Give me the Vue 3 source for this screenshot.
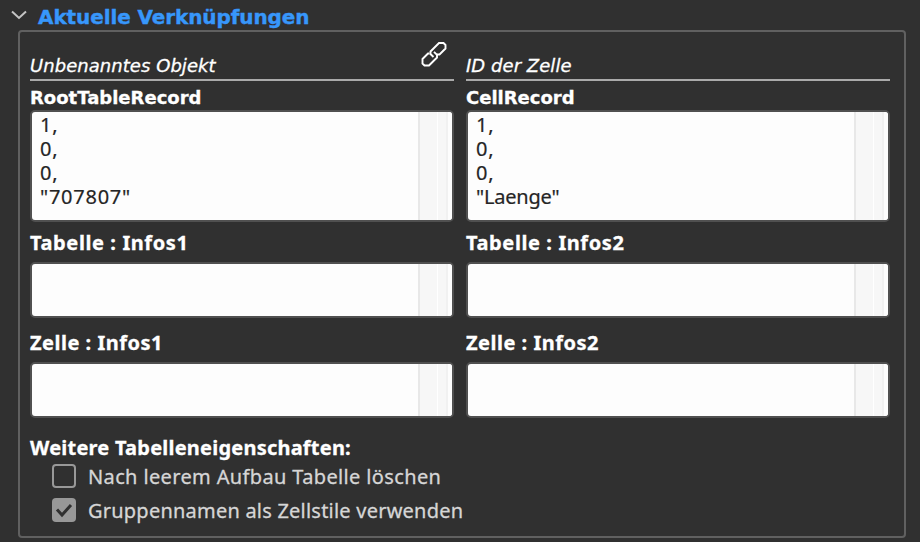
<script setup>
import { ref } from "vue";

const open = ref(true);

const columns = ref([
  {
    head: "Unbenanntes Objekt",
    link: true,
    record: "RootTableRecord",
    value: ["1,", "0,", "0,", '"707807"'],
    table: "Tabelle : Infos1",
    cell: "Zelle : Infos1"
  },
  {
    head: "ID der Zelle",
    link: false,
    record: "CellRecord",
    value: ["1,", "0,", "0,", '"Laenge"'],
    table: "Tabelle : Infos2",
    cell: "Zelle : Infos2"
  }
]);

const options = ref([
  { label: "Nach leerem Aufbau Tabelle löschen", checked: false },
  { label: "Gruppennamen als Zellstile verwenden", checked: true }
]);

const isNumeric = (line) => /\d/.test(line);
</script>

<template>
  <div class="page">
    <header @click="open = !open">
      <svg class="arrow" width="16" height="10" viewBox="0 0 16 10">
        <path d="M1 1.5 L8 8 L15 1.5" />
      </svg>
      <h1>Aktuelle Verknüpfungen</h1>
    </header>
    <section v-show="open" class="panel">
      <div class="columns">
        <div v-for="col in columns" :key="col.record" class="column">
          <div class="head">
            <em>{{ col.head }}</em>
            <svg v-if="col.link" class="link" width="28" height="28" viewBox="0 0 28 28">
              <path d="M13.5 17 L10.5 14 V11.5 L19 3 H23.5 L25.5 5 V8.5 L19.5 14.5 H16.5" />
              <path d="M9.5 13.5 H8 L2.5 19 V23.5 L4.5 25.5 H9 L17 17.5 V14.8 L14 11.8" />
            </svg>
          </div>
          <h2 class="record">{{ col.record }}</h2>
          <div class="box tall">
            <div class="value">
              <div v-for="(line, i) in col.value" :key="i" :class="{ numeric: isNumeric(line) }">{{ line }}</div>
            </div>
            <span class="gutter"></span>
          </div>
          <h2 class="table">{{ col.table }}</h2>
          <div class="box"><span class="gutter"></span></div>
          <h2 class="cell">{{ col.cell }}</h2>
          <div class="box"><span class="gutter"></span></div>
        </div>
      </div>
      <h2 class="more">Weitere Tabelleneigenschaften:</h2>
      <div v-for="opt in options" :key="opt.label" class="option" @click="opt.checked = !opt.checked">
        <span class="check" :class="{ checked: opt.checked }">
          <svg v-if="opt.checked" width="24" height="24" viewBox="0 0 24 24">
            <path d="M5 11.5 L10 17 L19 7" />
          </svg>
        </span>
        <span class="option-label">{{ opt.label }}</span>
      </div>
    </section>
  </div>
</template>

<style>
body {
  margin: 0;
  background-color: #303030;
}
</style>

<style scoped>
.page {
  box-sizing: border-box;
  width: 920px;
  height: 542px;
  overflow: hidden;
  background-color: #303030;
  font-family: "Noto Sans", "Open Sans", sans-serif;
  color: #fff;
}

header {
  display: flex;
  align-items: center;
  height: 30px;
  padding-left: 11px;
}

.arrow {
  fill: none;
  stroke: #c4c4c4;
  stroke-width: 2;
}

h1 {
  margin: 3px 0 0 11px;
  font-family: "DejaVu Sans", sans-serif;
  font-size: 20px;
  line-height: 28px;
  letter-spacing: -0.1px;
  color: #3797fb;
  -webkit-text-stroke: 0.4px #3797fb;
}

.panel {
  box-sizing: border-box;
  width: 888px;
  height: 508px;
  margin-left: 18px;
  padding: 0 10px;
  border: 2px solid #606060;
  border-radius: 4px;
}

.columns {
  display: flex;
  gap: 12px;
}

.column {
  width: 424px;
}

.head {
  display: flex;
  justify-content: space-between;
  box-sizing: border-box;
  height: 49px;
  border-bottom: 2px solid #aaa;
}

em {
  margin-top: 22px;
  font-family: "DejaVu Sans", sans-serif;
  font-size: 18px;
  line-height: 24px;
  letter-spacing: 0.05px;
  -webkit-text-stroke: 0.3px #fff;
}

.link {
  margin: 8px 6px 0 0;
  fill: none;
  stroke: #fff;
  stroke-width: 1.9;
}

h2 {
  height: 40px;
  margin: 0;
  font-size: 20px;
  line-height: 41px;
  letter-spacing: 0.6px;
  white-space: nowrap;
  -webkit-text-stroke: 0.3px #fff;
}

.column .record {
  height: 29px;
  font-family: "DejaVu Sans", sans-serif;
  font-size: 18px;
  line-height: 33px;
  letter-spacing: 0;
}

.column .cell {
  height: 44px;
  line-height: 49px;
  letter-spacing: 0.5px;
}

.box {
  display: flex;
  box-sizing: border-box;
  height: 56px;
  overflow: hidden;
  border: 2px solid #505050;
  border-radius: 5px;
  background-color: #fdfdfd;
}

.tall {
  height: 112px;
}

.value {
  margin: 1px 0 0 8px;
  font-size: 20px;
  line-height: 24px;
  letter-spacing: -0.2px;
  color: #252525;
  -webkit-text-stroke: 0.2px #252525;
}

.value .numeric {
  letter-spacing: 0.75px;
}

.gutter {
  width: 34px;
  margin-left: auto;
  background: linear-gradient(to right, #e8e8e8 2px, #f7f7f7 2px 19px, #fff 19px 20px, #f7f7f7 20px 28px, #f1f1f1 28px 30px, #fdfdfd 30px);
}

.more {
  height: 32px;
  margin-top: 9px;
  letter-spacing: 0.22px;
}

.option {
  display: flex;
  align-items: center;
  height: 34px;
  margin-left: 22px;
}

.check {
  box-sizing: border-box;
  width: 24px;
  height: 24px;
  border: 2px solid #989898;
  border-radius: 4px;
}

.checked {
  border: 0;
  background-color: #989898;
}

.check svg {
  display: block;
  fill: none;
  stroke: #303030;
  stroke-width: 3;
}

.option-label {
  margin-left: 12px;
  padding-top: 2px;
  font-size: 20px;
  line-height: 32px;
  letter-spacing: 0.36px;
  white-space: nowrap;
  color: #d6d6d6;
  -webkit-text-stroke: 0.3px #d6d6d6;
}

.checked + .option-label {
  letter-spacing: 0.22px;
}
</style>
